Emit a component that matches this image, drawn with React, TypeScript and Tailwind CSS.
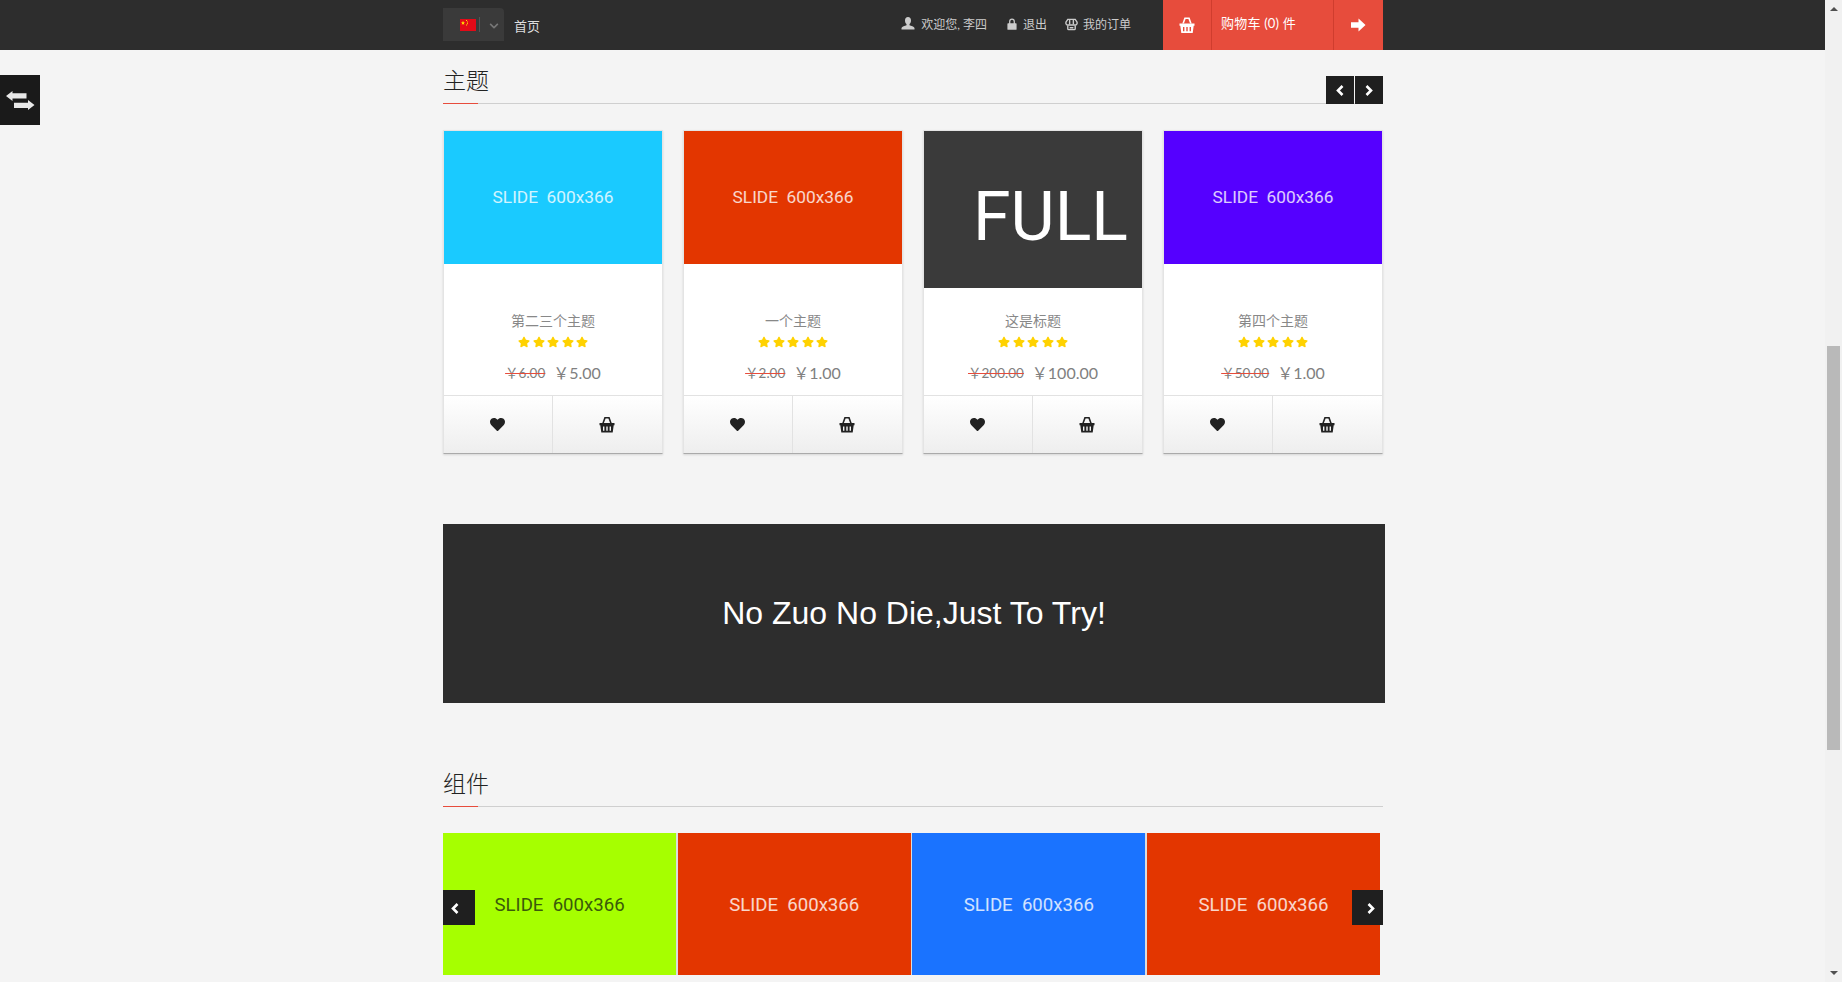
import { FaHeart, FaStar, FaChevronDown } from "react-icons/fa";

function Basket({ className }: { className: string }) {
  return (
    <svg viewBox="0 0 16 16" className={className} fill="currentColor">
      <path d="M3.300 6.500 5.400 .5h5.200l2.100 6h-1.600L9.400 2H6.600L4.900 6.500z" />
      <path fillRule="evenodd" d="M0.500 6.500h15v2.200h-.8l-1 7.300H2.300l-1-7.300h-.8zM4 10v4.200h1.400V10zM7.300 10v4.200h1.400V10zM10.600 10v4.200H12V10z" />
    </svg>
  );
}

function UserIcon() {
  return (
    <svg viewBox="0 0 14 14" className="w-[14px] h-[14px]" fill="currentColor">
      <path d="M7 0c1.900 0 3 1.400 3 3.400 0 1.600-.7 3-1.500 3.700v1.200c1.600.6 4.500 1.300 5 2.700v1.500H.5V11c.5-1.400 3.400-2.100 5-2.700V7.100C4.700 6.400 4 5 4 3.400 4 1.400 5.100 0 7 0z" />
    </svg>
  );
}

function LockIcon() {
  return (
    <svg viewBox="0 0 12 14" className="w-[10px] h-[12px]" fill="currentColor">
      <path fillRule="evenodd" d="M2.500 6V4a3.500 3.500 0 0 1 7 0v2h1.200c.5 0 .8.3.8.8v6.400c0 .5-.3.8-.8.8H1.300c-.5 0-.8-.3-.8-.8V6.800c0-.5.3-.8.8-.8zM4 6h4V4a2 2 0 0 0-4 0z" />
    </svg>
  );
}

function OrderIcon() {
  return (
    <svg viewBox="0 0 14 14" className="w-[13px] h-[13px]" fill="none" stroke="currentColor" strokeWidth="1.500">
      <path d="M3 1.500h8l2 3v1.500a2 2 0 0 1-2 1.500H3A2 2 0 0 1 1 6V4.500z" />
      <path d="M3 8v3.500a1 1 0 0 0 1 1h6a1 1 0 0 0 1-1V8M5 2v5M9 2v5M5 10.500h4" />
    </svg>
  );
}

function ArrowRight() {
  return (
    <svg viewBox="0 0 16 14" className="w-[15px] h-[14px]" fill="currentColor">
      <path d="M0 4h8V0l7.500 7L8 14v-4H0z" />
    </svg>
  );
}

function Exchange() {
  return (
    <svg viewBox="0 0 40 50" className="w-[40px] h-[50px]" fill="#e8e8e8">
      <path d="M6 21 12.500 16v2.300H26.500v5.200H12.500V26z" />
      <path d="M34.500 30 28 25v2.700H14V33h14v2z" />
    </svg>
  );
}

function ChevLeft() {
  return (
    <svg viewBox="0 0 8 11" className="w-[8px] h-[11px]" fill="none" stroke="currentColor" strokeWidth="2.600">
      <path d="M6.500 1 2 5.500 6.500 10" />
    </svg>
  );
}

function ChevRight() {
  return (
    <svg viewBox="0 0 8 11" className="w-[8px] h-[11px]" fill="none" stroke="currentColor" strokeWidth="2.600">
      <path d="M1.500 1 6 5.500 1.500 10" />
    </svg>
  );
}

function Flag() {
  return (
    <svg viewBox="0 0 16 12" className="w-[16px] h-[12px]">
      <rect width="16" height="12" fill="#e30a17" />
      <path d="M3 1.800 3.600 3.300 5 3.400 3.900 4.300 4.300 5.700 3 4.900 1.700 5.700 2.100 4.300 1 3.400 2.400 3.300z" fill="#ffde00" />
      <rect x="6" y="1" width="1" height="1" fill="#ffde00" />
      <rect x="7" y="2.500" width="1" height="1" fill="#ffde00" />
      <rect x="7" y="4.200" width="1" height="1" fill="#ffde00" />
      <rect x="6" y="5.500" width="1" height="1" fill="#ffde00" />
    </svg>
  );
}

function SectionHead({ title, nav }: { title: string; nav?: boolean }) {
  return (
    <div className="h-[54px] flex items-end justify-between border-b border-[#cfcfcf]">
      <h2 className="w-[35px] h-[35px] -mb-px border-b border-[#e74c3c] whitespace-nowrap text-[23px] leading-[23px] font-light text-[#222222]">
        {title}
      </h2>
      {nav && (
        <div className="flex gap-px -mb-px">
          <div className="w-[28px] h-[28px] bg-[#1f1f1f] text-white flex items-center justify-center">
            <ChevLeft />
          </div>
          <div className="w-[28px] h-[28px] bg-[#1f1f1f] text-white flex items-center justify-center">
            <ChevRight />
          </div>
        </div>
      )}
    </div>
  );
}

type Item = { bg: string; title: string; old: string; price: string; full?: boolean };

const items: Item[] = [
  { bg: "bg-[#1acaff]", title: "第二三个主题", old: "￥6.00", price: "￥5.00" },
  { bg: "bg-[#e33600]", title: "一个主题", old: "￥2.00", price: "￥1.00" },
  { bg: "bg-[#3a3a3a]", title: "这是标题", old: "￥200.00", price: "￥100.00", full: true },
  { bg: "bg-[#5500ff]", title: "第四个主题", old: "￥50.00", price: "￥1.00" },
];

function Card({ item }: { item: Item }) {
  return (
    <div className="border border-[#e4e4e4] border-b-[#aaaaaa] bg-white shadow-[0_1px_2px_rgba(0,0,0,0.12)]">
      <div className="h-[157px]">
        {item.full ? (
          <div className={`h-[157px] ${item.bg} flex items-center pl-[49px] pt-[14px] text-white font-['Roboto',sans-serif] text-[68px] leading-none`}>
            FULL
          </div>
        ) : (
          <div className={`h-[133px] ${item.bg} flex items-center justify-center pt-[1px] text-white/80 font-['Roboto',sans-serif] text-[17.3px] whitespace-pre`}>
            {"SLIDE  600x366"}
          </div>
        )}
      </div>
      <div className="h-[108px] pt-[23px] flex flex-col items-center border-b border-[#e2e2e2]">
        <div className="text-[14px] leading-[20px] text-[#888888]">{item.title}</div>
        <div className="mt-[5px] flex gap-[2.500px] text-[#ffd200]">
          <FaStar className="w-[12px] h-[12px]" />
          <FaStar className="w-[12px] h-[12px]" />
          <FaStar className="w-[12px] h-[12px]" />
          <FaStar className="w-[12px] h-[12px]" />
          <FaStar className="w-[12px] h-[12px]" />
        </div>
        <div className="mt-[15px] flex items-center gap-[8px] leading-[20px] text-[#808080]">
          <span className="text-[13.500px] line-through decoration-[#e74c3c]">{item.old}</span>
          <span className="text-[16px]">{item.price}</span>
        </div>
      </div>
      <div className="h-[57px] grid grid-cols-2 bg-gradient-to-b from-white to-[#eeeeee] text-[#222222]">
        <div className="flex items-center justify-center border-r border-[#e2e2e2] pr-[2px]">
          <FaHeart className="w-[15px] h-[15px]" />
        </div>
        <div className="flex items-center justify-center pr-[1px]">
          <Basket className="w-[16px] h-[17px]" />
        </div>
      </div>
    </div>
  );
}

function Slide({ bg, dark }: { bg: string; dark?: boolean }) {
  return (
    <div className={`${bg} flex items-center justify-center pt-[3px] font-['Roboto',sans-serif] text-[18.600px] whitespace-pre ${dark ? "text-[#3b5a0a]" : "text-white/80"}`}>
      {"SLIDE  600x366"}
    </div>
  );
}

export default function App() {
  return (
    <div className="relative flex h-[982px] overflow-hidden bg-[#f4f4f4] font-[Lato,'Noto_Sans_CJK_SC',sans-serif]">
      <div className="flex-1 min-w-0">
        <header className="h-[50px] bg-[#2d2d2d]">
          <div className="w-[940px] h-full ml-[443px] flex items-stretch">
            <div className="mt-[8px] h-[33px] w-[61px] bg-[#3a3a3a] rounded-tr-sm flex items-center pl-[17px]">
              <Flag />
              <div className="ml-[3px] w-px h-[15px] bg-[#555555]" />
              <FaChevronDown className="ml-[9px] w-[10px] h-[10px] mt-[2px] text-[#777777]" />
            </div>
            <div className="ml-[10px] text-[13px] text-[#dddddd] leading-[52px]">首页</div>
            <div className="flex-1" />
            <div className="flex items-center text-[12px] text-[#cccccc]">
              <span className="mb-[2px]"><UserIcon /></span>
              <span className="ml-[6px]">欢迎您, 李四</span>
              <span className="ml-[20px] mb-[2px]"><LockIcon /></span>
              <span className="ml-[6px]">退出</span>
              <span className="ml-[18px] mb-[2px]"><OrderIcon /></span>
              <span className="ml-[5px]">我的订单</span>
            </div>
            <div className="ml-[32px] w-[220px] bg-[#e74c3c] text-white flex items-stretch">
              <div className="w-[49px] border-r border-[#cf3d2e] flex items-center justify-center">
                <Basket className="w-[16px] h-[16px]" />
              </div>
              <div className="flex-1 pl-[9px] text-[13px] tracking-[0.2px] leading-[46px]">购物车 (0) 件</div>
              <div className="w-[50px] border-l border-[#cf3d2e] flex items-center justify-center">
                <ArrowRight />
              </div>
            </div>
          </div>
        </header>

        <main className="w-[940px] ml-[443px]">
          <SectionHead title="主题" nav />
          <div className="mt-[26px] grid grid-cols-4 gap-[20px]">
            {items.map((it) => (
              <Card key={it.title} item={it} />
            ))}
          </div>
          <div className="mt-[70px] w-[942px] h-[179px] pb-[2px] bg-[#2d2d2d] flex items-center justify-center text-white font-['Liberation_Sans',sans-serif] text-[32px]">
            No Zuo No Die,Just To Try!
          </div>
          <div className="mt-[50px]">
            <SectionHead title="组件" />
          </div>
          <div className="relative mt-[26px] h-[142px]">
            <div className="w-[937px] h-full grid grid-cols-4 gap-[1.500px] bg-[#dddddd]">
              <Slide bg="bg-[#a6ff00]" dark />
              <Slide bg="bg-[#e33600]" />
              <Slide bg="bg-[#1a73ff]" />
              <Slide bg="bg-[#e33600]" />
            </div>
            <div className="absolute left-0 top-[57px] w-[32px] h-[35px] bg-[#1f1f1f] text-white flex items-center justify-center">
              <span className="mr-[9px] mt-[1px]"><ChevLeft /></span>
            </div>
            <div className="absolute right-0 top-[57px] w-[31px] h-[35px] bg-[#1f1f1f] text-white flex items-center justify-center">
              <span className="ml-[7px] mt-[1px]"><ChevRight /></span>
            </div>
          </div>
        </main>
      </div>

      <div className="relative w-[17px] shrink-0 bg-[#f1f1f1]">
        <div className="absolute left-[5px] top-[7px] w-0 h-0 border-x-[4px] border-x-transparent border-b-[4px] border-b-[#505050]" />
        <div className="absolute left-[2px] top-[346px] w-[13px] h-[404px] bg-[#b9b9b9]" />
        <div className="absolute left-[5px] top-[971px] w-0 h-0 border-x-[4px] border-x-transparent border-t-[4px] border-t-[#505050]" />
      </div>

      <div className="absolute left-0 top-[75px] w-[40px] h-[50px] bg-[#1a1a1a]">
        <Exchange />
      </div>
    </div>
  );
}
